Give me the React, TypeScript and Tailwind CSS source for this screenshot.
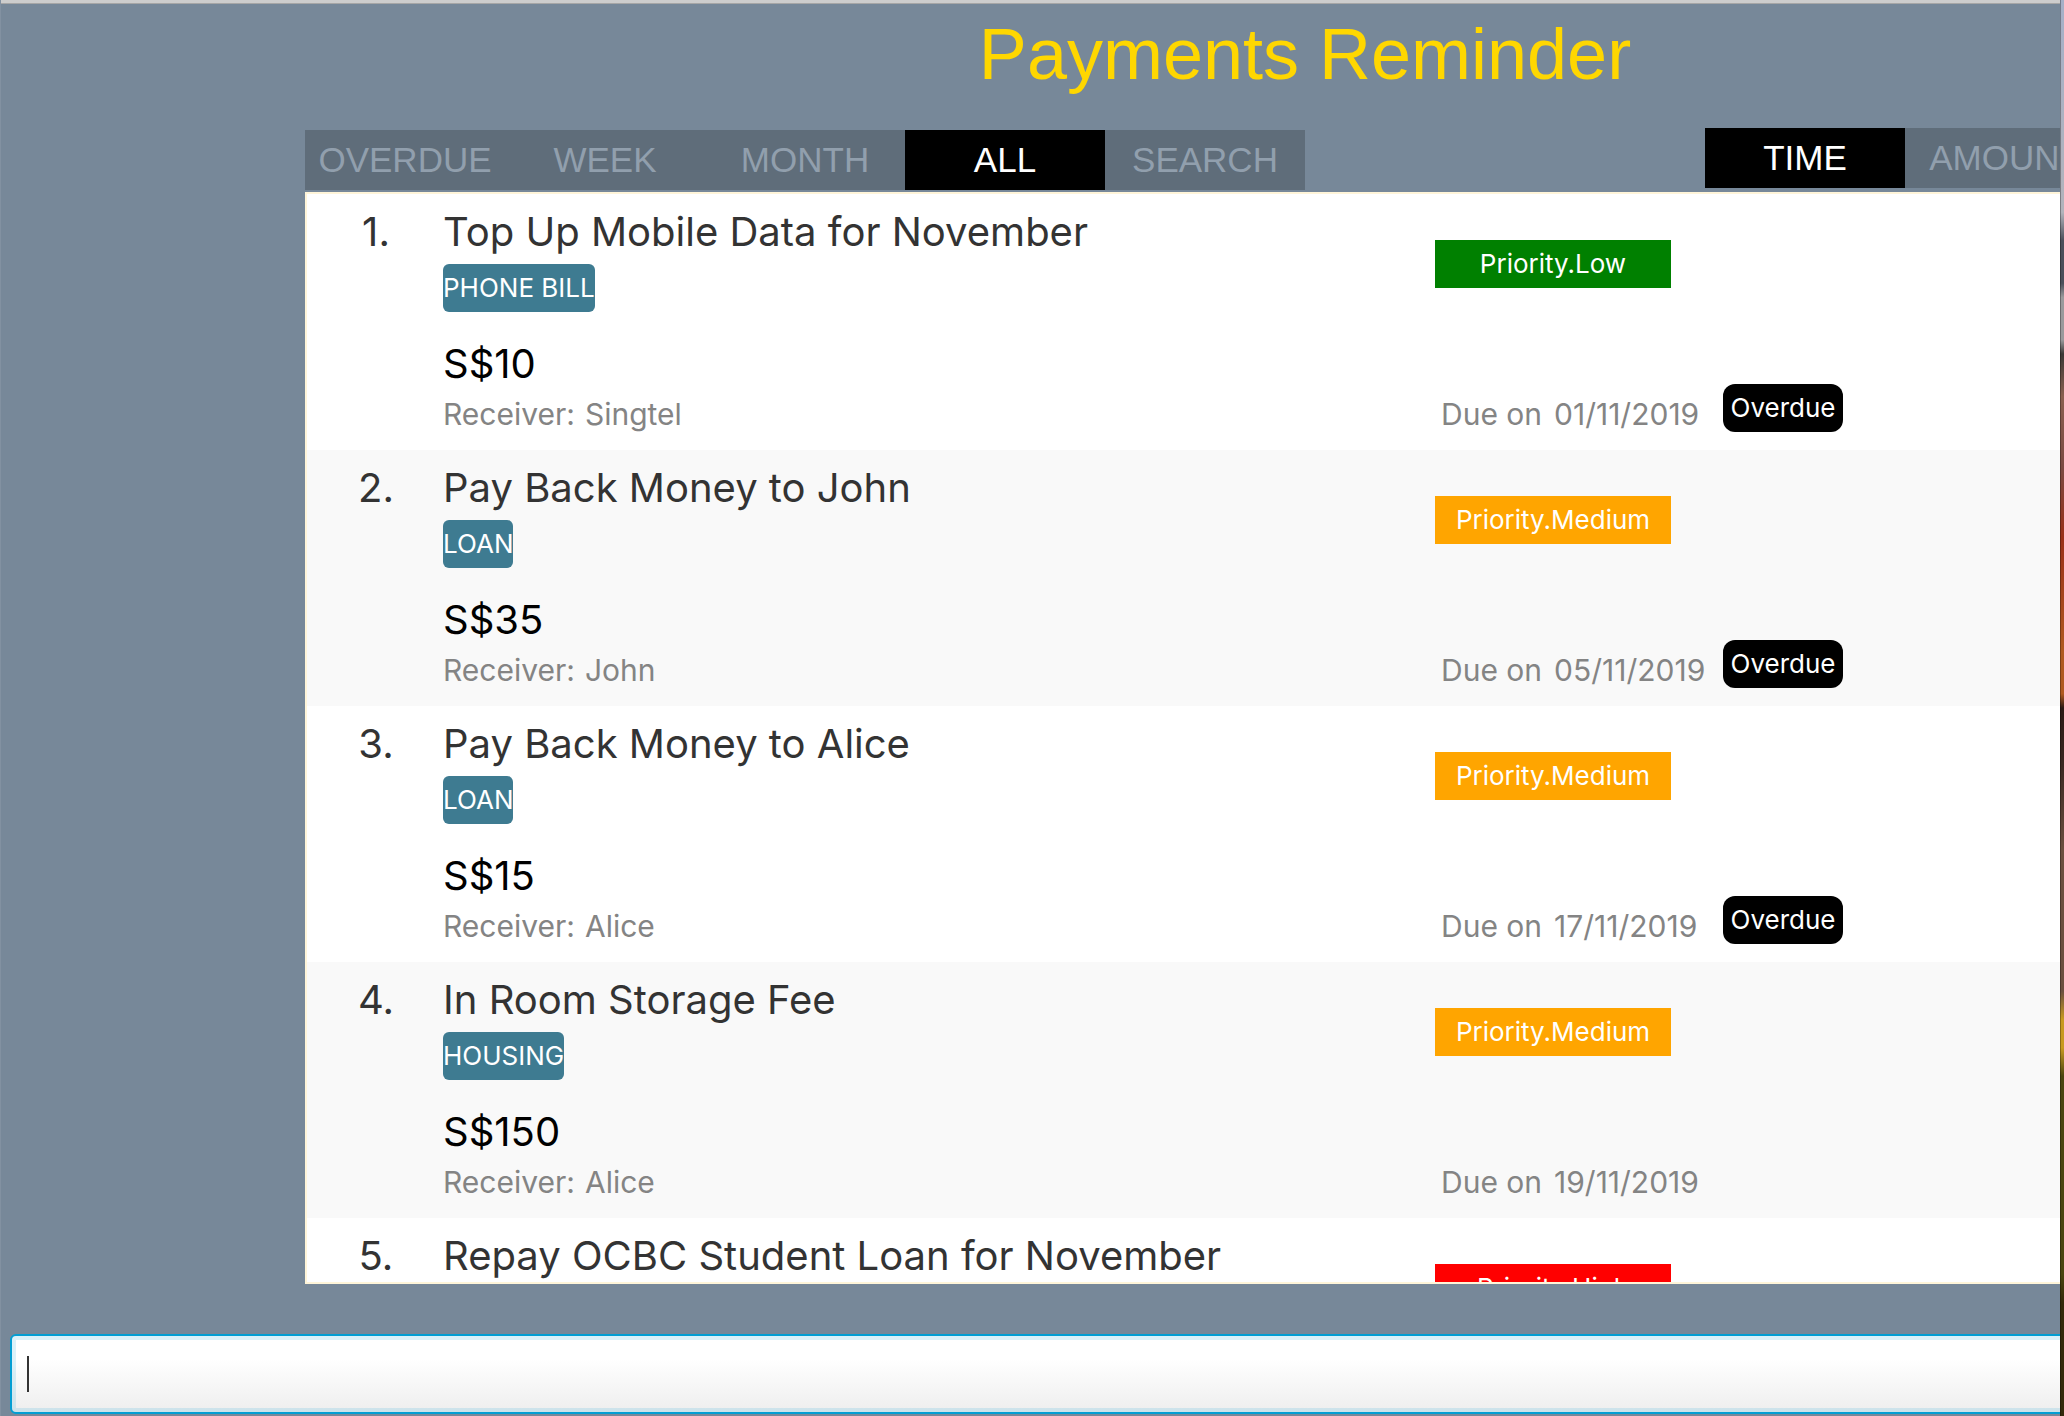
import { useState } from "react";

type Payment = {
  name: string;
  tag: string;
  amount: string;
  receiver: string;
  due: string;
  priority: "Low" | "Medium" | "High";
  overdue: boolean;
};

const payments: Payment[] = [
  { name: "Top Up Mobile Data for November", tag: "PHONE BILL", amount: "S$10", receiver: "Singtel", due: "01/11/2019", priority: "Low", overdue: true },
  { name: "Pay Back Money to John", tag: "LOAN", amount: "S$35", receiver: "John", due: "05/11/2019", priority: "Medium", overdue: true },
  { name: "Pay Back Money to Alice", tag: "LOAN", amount: "S$15", receiver: "Alice", due: "17/11/2019", priority: "Medium", overdue: true },
  { name: "In Room Storage Fee", tag: "HOUSING", amount: "S$150", receiver: "Alice", due: "19/11/2019", priority: "Medium", overdue: false },
  { name: "Repay OCBC Student Loan for November", tag: "", amount: "", receiver: "", due: "", priority: "High", overdue: false },
];

const priorityColor = {
  Low: "bg-[#008000]",
  Medium: "bg-[#ffa500]",
  High: "bg-[#ff0000]",
};

function Tabs({ items, initial }: { items: string[]; initial: string }) {
  const [active, setActive] = useState(initial);
  return (
    <div className="flex">
      {items.map((item) => (
        <button
          key={item}
          type="button"
          aria-pressed={item === active}
          onClick={() => setActive(item)}
          className={
            "h-[60px] w-[200px] text-[35px] leading-[60px] " +
            (item === active ? "bg-black text-white" : "bg-[#5f6d7a] text-[#919fad]")
          }
        >
          {item}
        </button>
      ))}
    </div>
  );
}

function Row({ payment, index }: { payment: Payment; index: number }) {
  return (
    <li className="flex h-[256px] shrink-0 odd:bg-white even:bg-[#f9f9f9]">
      <div className="w-[136px] pt-3.5 pl-0.5 text-center text-[40px] leading-[48px] text-[#333333]">
        {index}.
      </div>
      <div className="flex w-[992px] flex-col items-start pt-3.5">
        <h2 className="text-[40px] leading-[48px] text-[#333333]">{payment.name}</h2>
        {payment.tag && (
          <span className="mt-2 h-12 rounded-md bg-[#3e7b91] text-[26px] leading-[48px] text-white">
            {payment.tag}
          </span>
        )}
        {payment.amount && (
          <p className="mt-7 text-[40px] leading-[48px] text-black">{payment.amount}</p>
        )}
        {payment.receiver && (
          <p className="mt-1 flex gap-2.5 text-[30px] leading-[44px] text-[#848484]">
            <span>Receiver:</span>
            <span>{payment.receiver}</span>
          </p>
        )}
      </div>
      <div className="flex flex-col pt-[46px]">
        <span className={"h-12 w-[236px] text-center text-[26px] leading-[48px] text-white " + priorityColor[payment.priority]}>
          Priority.{payment.priority}
        </span>
        {payment.due && (
          <div className="mt-24 flex">
            <p className="flex w-[288px] gap-3 pt-2 pl-1.5 text-[30px] leading-[44px] text-[#848484]">
              <span>Due on</span>
              <span>{payment.due}</span>
            </p>
            {payment.overdue && (
              <span className="h-12 w-[120px] rounded-xl bg-black text-center text-[26px] leading-[48px] text-white">
                Overdue
              </span>
            )}
          </div>
        )}
      </div>
    </li>
  );
}

export default function App() {
  return (
    <div className="flex h-screen overflow-hidden bg-[#778899] font-['Liberation_Sans',Arial,sans-serif]">
      <main className="flex min-w-0 flex-1 flex-col overflow-hidden border-l border-[#8291a1]">
        <div className="h-1 shrink-0 border-b border-[#a6a6a6] bg-[#cdcdcd]" />
        <div className="-mr-[245px] flex min-h-0 flex-1 flex-col pl-[304px]">
          <h1 className="pt-2.5 text-center text-[72px] leading-[80px] text-[#ffd700]">Payments Reminder</h1>
          <div className="mt-[34px] flex items-start justify-between">
            <div className="mt-0.5">
              <Tabs items={["OVERDUE", "WEEK", "MONTH", "ALL", "SEARCH"]} initial="ALL" />
            </div>
            <div className="pr-[200px]">
              <Tabs items={["TIME", "AMOUNT"]} initial="TIME" />
            </div>
          </div>
          <ol className="mt-0.5 flex min-h-0 flex-1 flex-col overflow-hidden border-2 border-[#fff5d9] font-[Inter,sans-serif]">
            {payments.map((p, i) => (
              <Row key={p.name} payment={p} index={i + 1} />
            ))}
          </ol>
        </div>
        <div className="relative mt-[50px] -mr-[245px] mb-0.5 ml-[9px]">
          <input
            type="text"
            aria-label="Command"
            className="block h-20 w-full rounded-md border-2 border-[#039ed3] bg-linear-to-b from-white from-30% to-[#eeeeee] px-4 text-[26px] caret-transparent shadow-[inset_0_0_0_4px_rgba(3,158,211,0.14)] outline-none"
          />
          <span className="pointer-events-none absolute top-[22px] left-[17px] h-9 w-0.5 bg-[#333333]" />
        </div>
      </main>
      {/* Sliver of the desktop behind the window */}
      <div className="w-1 border-l border-black/30 bg-[linear-gradient(to_bottom,#a5b0c8_0%,#b2b3bb_15%,#4a4f5a_17%,#4a4f5a_20%,#9a9a9c_21%,#9a9a9c_24%,#3a3836_25%,#8a6050_28%,#7a4a42_33%,#9a3018_38%,#b05a20_46%,#b05a20_49%,#2a1a15_50%,#3a2822_54%,#6b5040_60%,#6b5040_70%,#c89a20_72%,#c89a20_74%,#4a4510_76%,#4a4510_90%,#33290a_92%,#33290a_100%)]" />
    </div>
  );
}
